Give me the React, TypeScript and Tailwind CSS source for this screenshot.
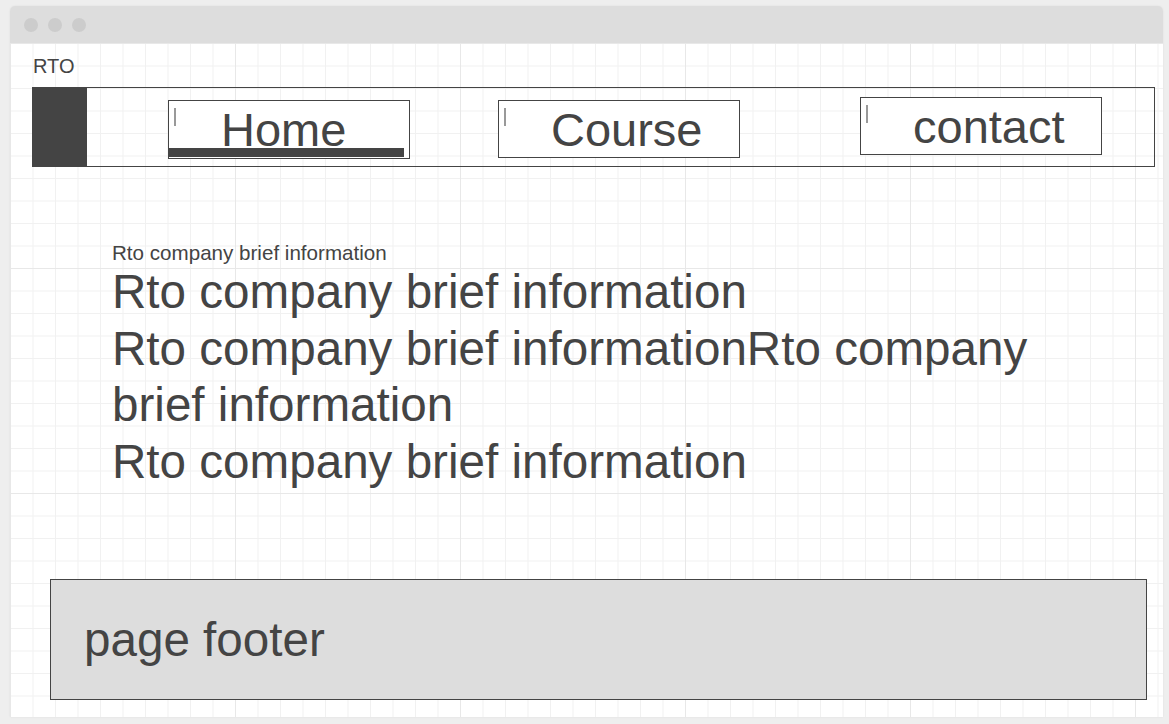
const navItems = [
    { label: "Home", active: true, className: "ml-[81px] mt-[12px] h-[59px]" },
    { label: "Course", active: false, className: "ml-[88px] mt-[12px] h-[58px]" },
    { label: "contact", active: false, className: "ml-[120px] mt-[9px] h-[58px]" },
];

export default function App() {
    return (
        <div className="h-screen bg-[#eeeeee] pt-[6px] pl-[10px] pr-[6px] pb-[6px] font-['Liberation_Sans',Arial,sans-serif] text-[#444444]">
            <div className="flex h-[711px] w-[1153px] flex-col overflow-hidden rounded-t-[5px] shadow-[0_0_2px_rgba(0,0,0,0.08)]">
                {/* Title bar */}
                <div className="flex h-[37px] shrink-0 items-center gap-[10px] bg-[#dddddd] pl-[14px]">
                    <span className="h-[14px] w-[14px] rounded-full bg-[#cccccc]"></span>
                    <span className="h-[14px] w-[14px] rounded-full bg-[#cccccc]"></span>
                    <span className="h-[14px] w-[14px] rounded-full bg-[#cccccc]"></span>
                </div>

                {/* Canvas */}
                <div className="flex-1 bg-white bg-[image:linear-gradient(to_right,#e8e8e8_1px,transparent_1px),linear-gradient(to_bottom,#e8e8e8_1px,transparent_1px),linear-gradient(to_right,#f1f1f1_1px,transparent_1px),linear-gradient(to_bottom,#f1f1f1_1px,transparent_1px)] bg-[size:225px_225px,225px_225px,22.5px_22.5px,22.5px_22.5px] pt-[12px]">
                    <p className="pl-[23px] text-[20px] leading-[23px]">RTO</p>

                    {/* Nav */}
                    <div className="ml-[22px] mt-[9px] flex h-[80px] w-[1123px] items-start border border-[#444444]">
                        <div className="h-full w-[54px] shrink-0 bg-[#444444]"></div>
                        {navItems.map((item) => (
                            <div
                                key={item.label}
                                className={`relative w-[242px] shrink-0 border border-[#444444] bg-white pl-[52px] pt-[2px] text-[47px] leading-[54px] ${item.className}`}
                            >
                                <span className="absolute left-[5px] top-[7px] h-[18px] w-[2px] bg-[#999999]"></span>
                                {item.label}
                                {item.active && (
                                    <span className="absolute bottom-[1px] left-0 h-[9px] w-[235px] bg-[#444444]"></span>
                                )}
                            </div>
                        ))}
                    </div>

                    {/* Content */}
                    <div className="ml-[102px] mt-[74px] w-[960px]">
                        <p className="text-[20.6px] leading-[23px]">Rto company brief information</p>
                        <p className="text-[47.6px] leading-[56.5px]">Rto company brief information</p>
                        <p className="text-[47.6px] leading-[56.5px]">Rto company brief informationRto company brief information</p>
                        <p className="text-[47.6px] leading-[56.5px]">Rto company brief information</p>
                    </div>

                    {/* Footer */}
                    <div className="ml-[40px] mt-[89px] h-[121px] w-[1097px] border border-[#444444] bg-[#dddddd] pl-[33px] pt-[32px]">
                        <p className="text-[47.6px] leading-[56.5px]">page footer</p>
                    </div>
                </div>
            </div>
        </div>
    );
}
